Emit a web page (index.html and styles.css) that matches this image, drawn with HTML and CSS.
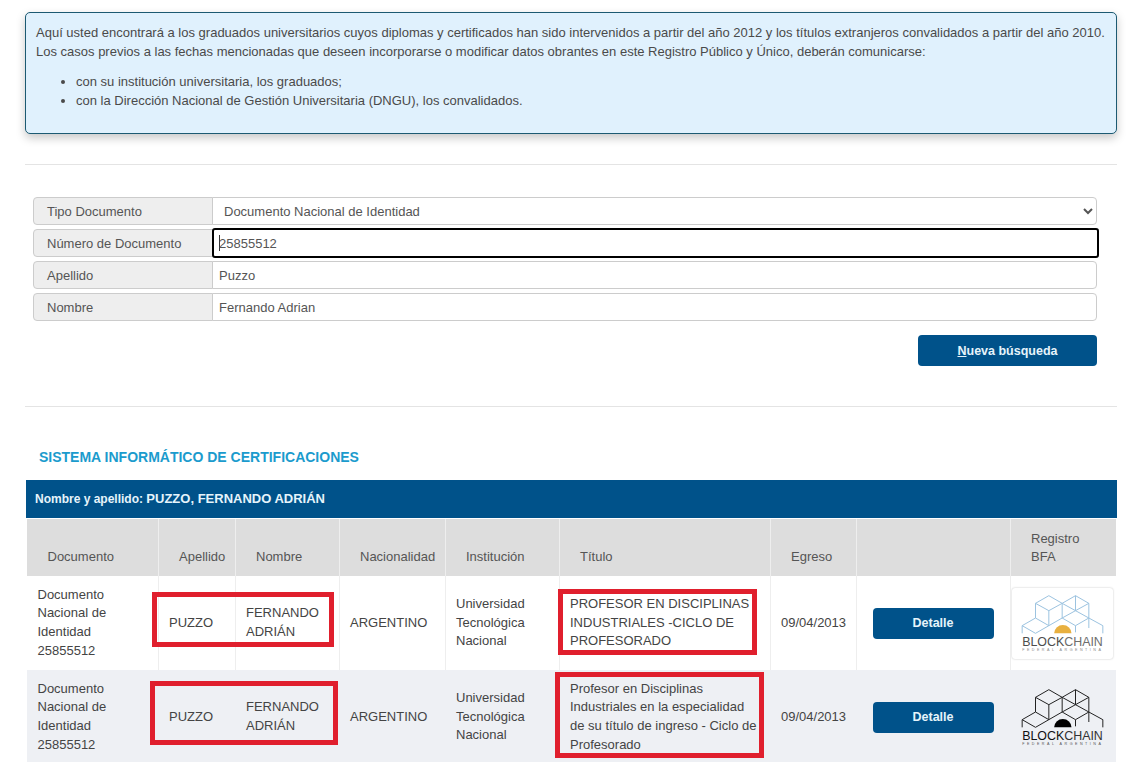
FILE: index.html
```html
<!DOCTYPE html>
<html lang="es">
<head>
<meta charset="utf-8">
<title>Sistema Informático de Certificaciones</title>
<link rel="stylesheet" href="styles.css">
</head>
<body>
<main class="page">
  <section class="alert">
    <p class="alert-text">Aquí usted encontrará a los graduados universitarios cuyos diplomas y certificados han sido intervenidos a partir del año 2012 y los títulos extranjeros convalidados a partir del año 2010.<br>Los casos previos a las fechas mencionadas que deseen incorporarse o modificar datos obrantes en este Registro Público y Único, deberán comunicarse:</p>
    <ul class="alert-list">
      <li>con su institución universitaria, los graduados;</li>
      <li>con la Dirección Nacional de Gestión Universitaria (DNGU), los convalidados.</li>
    </ul>
  </section>
  <hr class="rule rule-top">
  <form class="search">
    <div class="field">
      <label class="field-label">Tipo Documento</label>
      <select class="field-control field-select"><option>Documento Nacional de Identidad</option></select>
    </div>
    <div class="field">
      <label class="field-label">Número de Documento</label>
      <input class="field-control field-focus" value="25855512">
    </div>
    <div class="field">
      <label class="field-label">Apellido</label>
      <input class="field-control" value="Puzzo">
    </div>
    <div class="field">
      <label class="field-label">Nombre</label>
      <input class="field-control" value="Fernando Adrian">
    </div>
    <div class="search-actions">
      <button type="button" class="btn btn-search"><u>N</u>ueva búsqueda</button>
    </div>
  </form>
  <hr class="rule rule-mid">
  <h2 class="section-title">SISTEMA INFORMÁTICO DE CERTIFICACIONES</h2>
  <section class="results">
    <div class="results-bar">Nombre y apellido: <span class="results-name">PUZZO, FERNANDO ADRIÁN</span></div>
    <table class="grid">
      <colgroup>
        <col class="c-doc"><col class="c-ape"><col class="c-nom"><col class="c-nac"><col class="c-ins"><col class="c-tit"><col class="c-egr"><col class="c-det"><col class="c-bfa">
      </colgroup>
      <thead>
        <tr>
          <th>Documento</th><th>Apellido</th><th>Nombre</th><th>Nacionalidad</th><th>Institución</th><th>Título</th><th>Egreso</th><th></th><th>Registro<br>BFA</th>
        </tr>
      </thead>
      <tbody>
        <tr class="row-one">
          <td>Documento<br>Nacional de<br>Identidad<br>25855512</td>
          <td>PUZZO</td>
          <td>FERNANDO<br>ADRIÁN</td>
          <td>ARGENTINO</td>
          <td>Universidad<br>Tecnológica<br>Nacional</td>
          <td>PROFESOR EN DISCIPLINAS<br>INDUSTRIALES -CICLO DE<br>PROFESORADO</td>
          <td>09/04/2013</td>
          <td class="cell-action"><button type="button" class="btn btn-detail">Detalle</button></td>
          <td class="cell-logo">
            <svg class="logo logo-light" viewBox="38 22 302 213" width="101" height="71" role="img" aria-label="Blockchain Federal Argentina">
              <path class="logo-lines" d="M148 45 108 68 148 90 188 68ZM108 68V112L148 135V90M188 68V112M148 135 188 112M188 68 228 45 268 68 228 90 188 68M228 45V90M268 68V112M188 112 228 90 268 112 228 135ZM108 112 68 135 108 158 148 135M68 135V158M228 135V155M268 112V142M268 112 310 135V158"/>
              <path class="logo-sun" d="M164 158a26 25 0 0 1 52 0Z"/>
              <text class="logo-word" x="68" y="197" textLength="242" lengthAdjust="spacingAndGlyphs">BLOCK<tspan class="logo-word-soft">CHAIN</tspan></text>
              <text class="logo-sub" x="68" y="212" textLength="242">FEDERAL ARGENTINA</text>
            </svg>
          </td>
        </tr>
        <tr class="row-two">
          <td>Documento<br>Nacional de<br>Identidad<br>25855512</td>
          <td>PUZZO</td>
          <td>FERNANDO<br>ADRIÁN</td>
          <td>ARGENTINO</td>
          <td>Universidad<br>Tecnológica<br>Nacional</td>
          <td>Profesor en Disciplinas<br>Industriales en la especialidad<br>de su título de ingreso - Ciclo de<br>Profesorado</td>
          <td>09/04/2013</td>
          <td class="cell-action"><button type="button" class="btn btn-detail">Detalle</button></td>
          <td class="cell-logo">
            <svg class="logo logo-dark" viewBox="38 22 302 213" width="101" height="71" role="img" aria-label="Blockchain Federal Argentina">
              <path class="logo-lines" d="M148 45 108 68 148 90 188 68ZM108 68V112L148 135V90M188 68V112M148 135 188 112M188 68 228 45 268 68 228 90 188 68M228 45V90M268 68V112M188 112 228 90 268 112 228 135ZM108 112 68 135 108 158 148 135M68 135V158M228 135V155M268 112V142M268 112 310 135V158"/>
              <path class="logo-sun" d="M164 158a26 25 0 0 1 52 0Z"/>
              <text class="logo-word" x="68" y="197" textLength="242" lengthAdjust="spacingAndGlyphs">BLOCK<tspan class="logo-word-soft">CHAIN</tspan></text>
              <text class="logo-sub" x="68" y="212" textLength="242">FEDERAL ARGENTINA</text>
            </svg>
          </td>
        </tr>
      </tbody>
    </table>
    <div class="mark mark-a"></div>
    <div class="mark mark-b"></div>
    <div class="mark mark-c"></div>
    <div class="mark mark-d"></div>
  </section>
</main>
</body>
</html>
```
FILE: styles.css
```css
* { box-sizing: border-box; }
html, body { margin: 0; padding: 0; background: #fff; }
body {
  font-family: "Liberation Sans", Arial, sans-serif;
  font-size: 13px;
  color: #444;
}
.page { padding: 12px 21px 0 25px; }

.alert {
  height: 122px;
  padding: 10px;
  background: #e0f1fd;
  border: 1px solid #1c5a72;
  border-radius: 5px;
  box-shadow: 0 4px 10px rgba(0, 0, 0, .22);
  line-height: 19px;
  color: #4a4a4a;
}
.alert-text { margin: 0; }
.alert-list { margin: 11px 0 0; padding-left: 40px; }

.rule { border: 0; border-top: 1px solid #e4e4e4; margin: 0; }
.rule-top { margin-top: 30px; }
.rule-mid { margin-top: 40px; }

.search { padding: 32px 20px 0 8px; }
.field { display: flex; height: 28px; margin-bottom: 4px; }
.field-label {
  flex: 0 0 180px;
  display: flex;
  align-items: center;
  padding-left: 13px;
  background: #eee;
  border: 1px solid #ccc;
  border-radius: 4px 0 0 4px;
  color: #555;
}
.field-control {
  flex: 1;
  min-width: 0;
  margin-left: -1px;
  padding: 0 6px;
  background-color: #fff;
  border: 1px solid #ccc;
  border-radius: 0 4px 4px 0;
  font: inherit;
  color: #555;
  outline: 0;
}
.field-select { padding-left: 7px; }
.field-focus {
  height: 30px;
  margin-top: -1px;
  margin-right: -2px;
  border: 2px solid #000;
  border-radius: 3px;
  padding-left: 5px;
  background: #fff linear-gradient(#333, #333) 5px 50% / 1px 16px no-repeat;
}
.search-actions { display: flex; justify-content: flex-end; padding-top: 10px; }

.btn {
  border: 0;
  border-radius: 4px;
  background: #00528a;
  color: #e6f4fb;
  font: bold 12.5px "Liberation Sans", Arial, sans-serif;
  padding: 0;
}
.btn-search { width: 179px; height: 31px; }
.btn-detail { width: 121px; height: 31px; }

.section-title {
  margin: 42px 0 0 14px;
  height: 31px;
  font-size: 14px;
  line-height: 16px;
  font-weight: bold;
  color: #1b9bcd;
}

.results { position: relative; margin-left: 1px; width: 1091px; }
.results-bar {
  height: 38px;
  padding-left: 9px;
  background: #00528a;
  color: #e6f4fb;
  font-size: 12px;
  font-weight: bold;
  line-height: 37px;
}
.results-name { font-size: 13px; }

.grid {
  width: 1089px;
  margin: 1px 0 0 1px;
  table-layout: fixed;
  border-collapse: collapse;
  line-height: 18.75px;
}
.c-doc { width: 131px; }
.c-ape { width: 77px; }
.c-nom { width: 104px; }
.c-nac { width: 106px; }
.c-ins { width: 114px; }
.c-tit { width: 211px; }
.c-egr { width: 86px; }
.c-det { width: 154px; }
.c-bfa { width: 106px; }

.grid th {
  height: 57px;
  padding: 0 4px 9px 20.5px;
  background: #ddd;
  border-right: 1px solid #eee;
  color: #555;
  font-weight: normal;
  text-align: left;
  vertical-align: bottom;
}
.grid td { padding: 0 0 0 10.5px; vertical-align: middle; color: #444; }
.row-one td { height: 94px; border-right: 1px solid #eee; }
.row-two td {
  height: 92px;
  padding-top: 2px;
  background: #eef0f4;
  border-right: 1px solid #eef0f4;
}
.grid .cell-action { padding-left: 16px; }
.grid .cell-logo { padding-left: 1px; line-height: 0; }
.grid th:last-child, .grid tr td:last-child { border-right: 0; }

.logo { display: block; }
.logo-lines { fill: none; stroke-width: 3; }
.logo-word { font: 38px "Liberation Sans", Arial, sans-serif; }
.logo-sub { font: 11px "Liberation Sans", Arial, sans-serif; letter-spacing: 6px; }
.logo-light {
  background: #fff;
  border-radius: 3px;
  box-shadow: 0 0 2px rgba(0, 0, 0, .25);
}
.logo-light .logo-lines { stroke: #9cc3e0; }
.logo-light .logo-sun { fill: #e8b040; }
.logo-light .logo-word { fill: #4d4d4d; }
.logo-light .logo-word-soft { fill: #6d6d6d; }
.logo-light .logo-sub { fill: #888; }
.logo-dark .logo-lines { stroke: #222; }
.logo-dark .logo-sun { fill: #000; }
.logo-dark .logo-word { fill: #111; }
.logo-dark .logo-word-soft { fill: #333; }
.logo-dark .logo-sub { fill: #555; }

.mark { position: absolute; border: 5px solid #e01f2d; }
.mark-a { left: 126px; top: 112px; width: 182px; height: 55px; }
.mark-b { left: 124px; top: 201px; width: 188px; height: 64px; }
.mark-c { left: 532px; top: 109px; width: 199px; height: 66px; }
.mark-d { left: 529px; top: 192px; width: 209px; height: 86px; }
```
